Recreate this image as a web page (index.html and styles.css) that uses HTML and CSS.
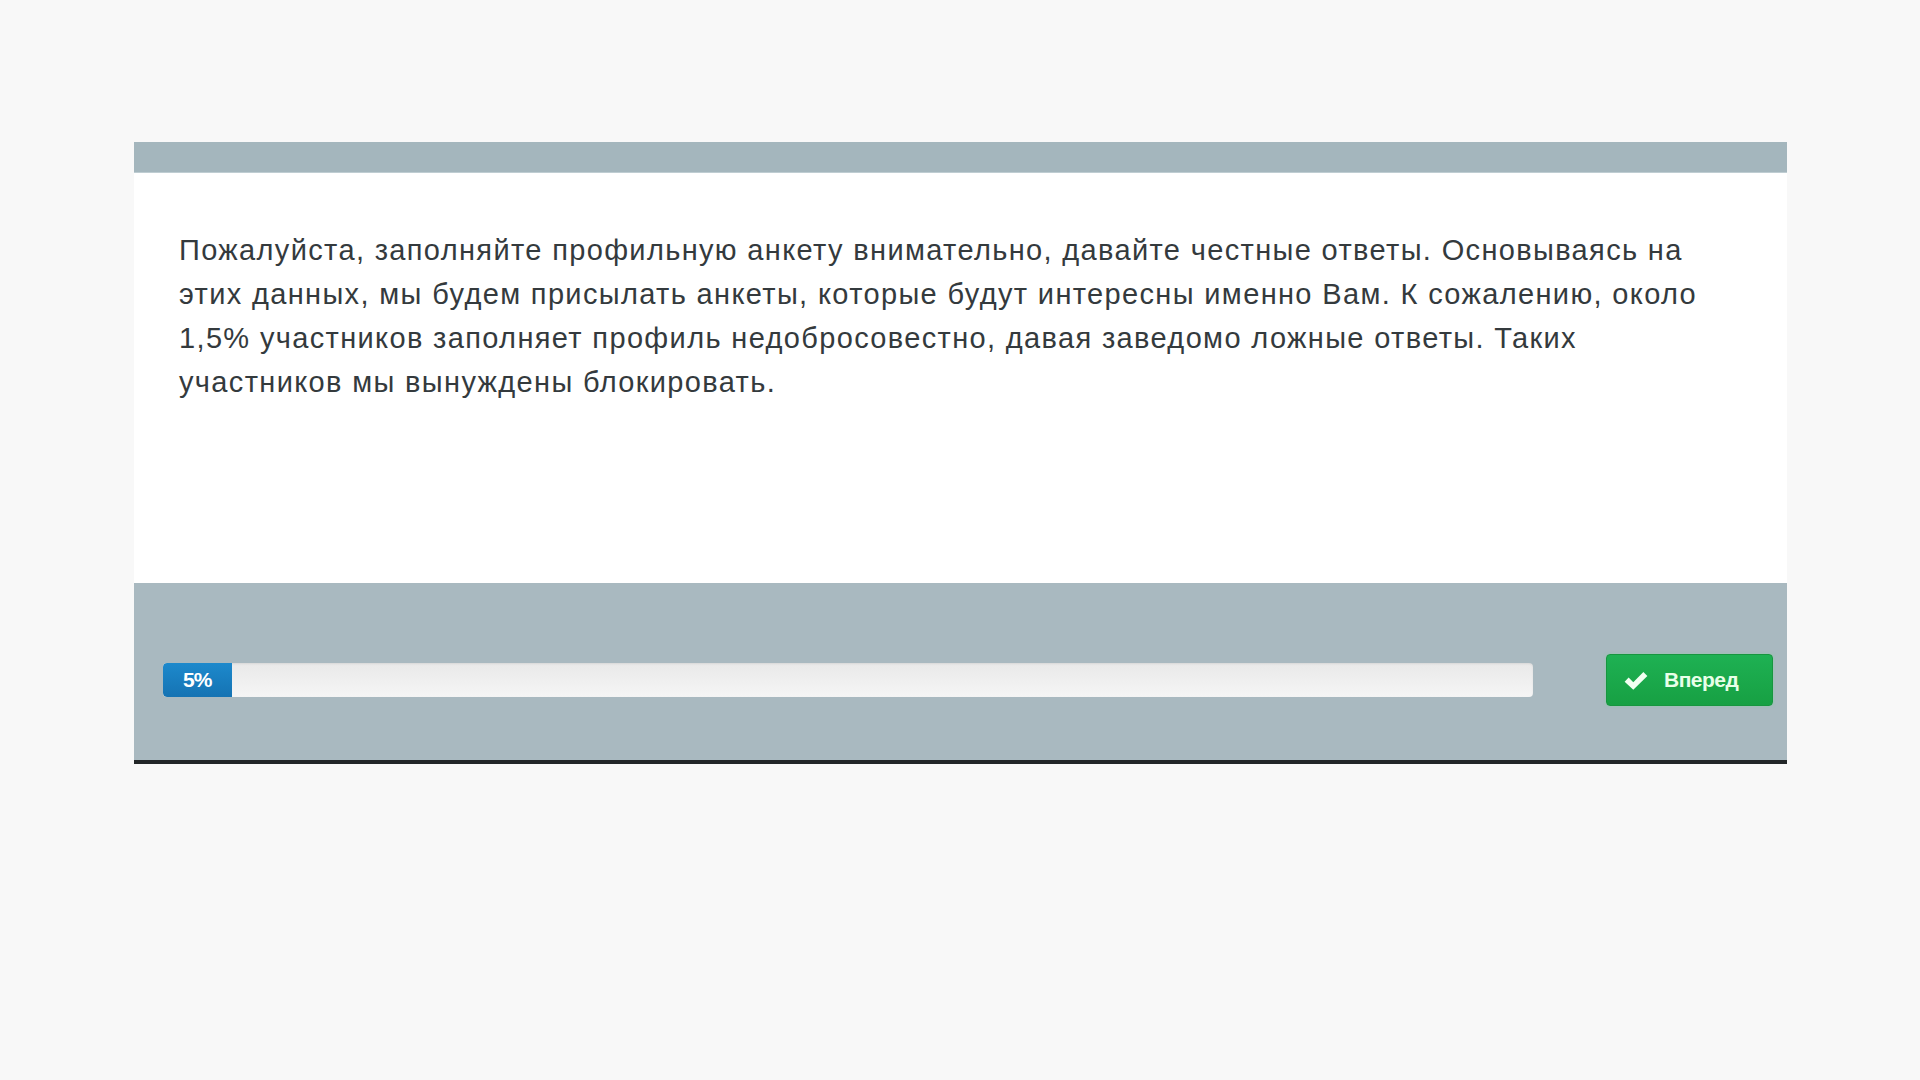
FILE: index.html
```html
<!DOCTYPE html>
<html lang="ru">
<head>
<meta charset="utf-8">
<title>Анкета</title>
<link rel="stylesheet" href="styles.css">
</head>
<body>
<div class="page">
  <div class="card">
    <div class="card-header"></div>
    <div class="card-body">
      <p class="intro">Пожалуйста, заполняйте профильную анкету внимательно, давайте честные ответы. Основываясь на этих данных, мы будем присылать анкеты, которые будут интересны именно Вам. К сожалению, около 1,5% участников заполняет профиль недобросовестно, давая заведомо ложные ответы. Таких участников мы вынуждены блокировать.</p>
    </div>
    <div class="card-footer">
      <div class="progress">
        <div class="progress-bar" style="width: 5%">5%</div>
      </div>
      <button class="btn-next" type="button">
        <svg class="check" viewBox="0 0 24 20" width="26" height="22" aria-hidden="true">
          <path d="M1.5 11.5 L5.2 7.8 L9.5 12 L18.8 2.5 L22.5 6.2 L9.5 19 Z" fill="currentColor"/>
        </svg>
        <span>Вперед</span>
      </button>
    </div>
  </div>
</div>
</body>
</html>
```

FILE: styles.css
```css
html, body {
  margin: 0;
  padding: 0;
}
body {
  background: #f8f8f8;
  font-family: "Liberation Sans", Arial, sans-serif;
  width: 1920px;
  height: 1080px;
}
.page {
  padding: 142px 133px 0 134px;
}
.card {
  display: flex;
  flex-direction: column;
}
.card-header {
  height: 30px;
  background: #a4b6bd;
  border-bottom: 1px solid #bfcdd2;
}
.card-body {
  background: #ffffff;
  height: 410px;
  padding: 55px 40px 0 45px;
  box-sizing: border-box;
}
.intro {
  margin: 0;
  font-size: 29px;
  line-height: 44px;
  letter-spacing: 1.35px;
  color: #343a3d;
  max-width: 1550px;
}
.card-footer {
  background: #a9b9c0;
  height: 160px;
  border-bottom: 4px solid #222628;
  display: flex;
  align-items: center;
  padding: 17px 14px 0 29px;
}
.progress {
  width: 1370px;
  height: 34px;
  background: linear-gradient(#e9e9e9, #f5f5f5);
  border-radius: 4px;
  box-shadow: inset 0 1px 2px rgba(0,0,0,0.08);
  display: flex;
  overflow: hidden;
}
.progress-bar {
  background: linear-gradient(#1d89cc, #1573b3);
  color: #ffffff;
  font-weight: bold;
  font-size: 21px;
  display: flex;
  align-items: center;
  justify-content: center;
  border-radius: 4px 0 0 4px;
  letter-spacing: -1px;
}
.btn-next {
  margin-left: auto;
  width: 167px;
  height: 52px;
  border: 1px solid #17963f;
  border-radius: 4px;
  background: linear-gradient(#1eb153, #17a043);
  color: #e8ffe9;
  font-family: "Liberation Sans", Arial, sans-serif;
  font-weight: bold;
  font-size: 21px;
  display: flex;
  align-items: center;
  padding: 0 0 0 16px;
  gap: 15px;
  box-shadow: 0 0 3px rgba(120, 220, 150, 0.5);
  letter-spacing: -0.5px;
}
.check {
  width: 26px;
  height: 22px;
  color: #f2fff2;
}
```
